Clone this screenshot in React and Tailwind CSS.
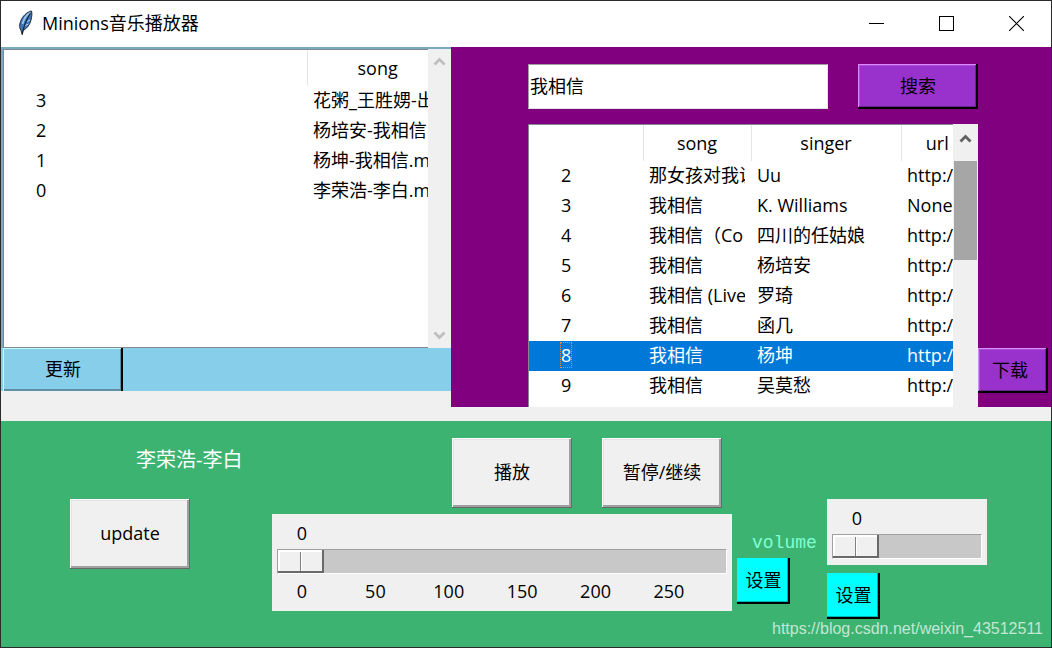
import React, { useState } from 'react';

const LOCAL_SONGS = [
  { id: 3, song: '花粥_王胜娚-出' },
  { id: 2, song: '杨培安-我相信' },
  { id: 1, song: '杨坤-我相信.m' },
  { id: 0, song: '李荣浩-李白.m' },
];

const RESULTS = [
  { id: 2, song: '那女孩对我说', singer: 'Uu', url: 'http:/' },
  { id: 3, song: '我相信', singer: 'K. Williams', url: 'None' },
  { id: 4, song: '我相信（Co', singer: '四川的任姑娘', url: 'http:/' },
  { id: 5, song: '我相信', singer: '杨培安', url: 'http:/' },
  { id: 6, song: '我相信 (Live', singer: '罗琦', url: 'http:/' },
  { id: 7, song: '我相信', singer: '函几', url: 'http:/' },
  { id: 8, song: '我相信', singer: '杨坤', url: 'http:/' },
  { id: 9, song: '我相信', singer: '吴莫愁', url: 'http:/' },
];

const TICKS = [0, 50, 100, 150, 200, 250];

const BUTTON_TONES = {
  gray: 'bg-[#f0f0f0] shadow-[inset_-1px_-1px_#696969,inset_1px_1px_#ffffff,inset_-3px_-3px_#a0a0a0,inset_2px_2px_#e3e3e3]',
  violet: 'bg-[#9932cc] shadow-[inset_-2px_-2px_#000000,inset_1px_1px_#d68cff,inset_-3px_-3px_#6b238f,inset_2px_2px_#b04be0]',
  cyan: 'bg-[#00ffff] shadow-[inset_-2px_-2px_#000000,inset_-3px_-3px_#00b2b2]',
  sky: 'bg-[#87ceeb] shadow-[inset_-2px_0_#000000,inset_1px_1px_#bdffff,inset_-3px_-2px_#5e90a4]',
};

const TkButton = ({ tone = 'gray', className = '', children }) => (
  <button type="button" className={`shrink-0 whitespace-nowrap pb-0.5 ${BUTTON_TONES[tone]} ${className}`}>
    {children}
  </button>
);

const Chevron = ({ down = false, color }) => (
  <svg width="13" height="9" viewBox="0 0 13 9" className={down ? 'rotate-180' : ''}>
    <path d="M1.500 7.500 6.500 2.500 11.500 7.500" fill="none" stroke={color} strokeWidth="2.800" />
  </svg>
);

const Feather = () => (
  <svg width="16" height="26" viewBox="0 0 16 26">
    <path d="M13.500 1C9 2 4.500 6 2.500 11.500C1.200 15 1.300 18 3 20.500L4.200 24.500L5 20.500C9 18.500 12 14.500 13 10C13.700 7 14.300 3.500 13.500 1Z" fill="#3c78bd" stroke="#222c38" strokeWidth="1" />
    <path d="M12.500 2.500C9 4.500 6 8.500 4.500 14" stroke="#9cc6ee" strokeWidth="1.800" fill="none" />
    <path d="M12.500 3C9.500 8 5.500 14 4.300 24.500" stroke="#14202e" strokeWidth="1.100" fill="none" />
    <path d="M12 10 9.500 11.500M10.500 14 7.500 15.500" stroke="#e8f2fc" strokeWidth="0.800" />
  </svg>
);

const TitleBar = () => (
  <header className="flex h-[46px] items-center bg-white pb-0.5 pl-[17px]">
    <Feather />
    <h1 className="ml-2 flex-1 text-[18px] text-black">Minions音乐播放器</h1>
    <button type="button" aria-label="最小化" className="flex h-full w-[70px] items-center justify-center">
      <svg width="15" height="15"><path d="M0 7.500H15" stroke="#000" /></svg>
    </button>
    <button type="button" aria-label="最大化" className="flex h-full w-[70px] items-center justify-center">
      <svg width="15" height="15"><rect x="0.500" y="0.500" width="14" height="14" fill="none" stroke="#000" /></svg>
    </button>
    <button type="button" aria-label="关闭" className="flex h-full w-[70px] items-center justify-center">
      <svg width="15" height="15"><path d="M0 0 15 15M15 0 0 15" stroke="#000" strokeWidth="1.100" /></svg>
    </button>
  </header>
);

const LocalPanel = () => (
  <section className="w-3/7 self-start bg-[#87ceeb]">
    <div className="flex min-h-[301px] border-l-2 border-t-2 border-[#7aaabd]">
      <div className="min-w-0 flex-1 overflow-hidden border-y border-l border-[#828790] bg-white">
        <table className="w-full table-fixed border-collapse text-left">
          <colgroup>
            <col className="w-[303px]" />
            <col />
          </colgroup>
          <thead>
            <tr className="h-9">
              <th className="border-r border-[#e5e5e5] p-0"></th>
              <th className="p-0 pl-[50px] font-normal">song</th>
            </tr>
          </thead>
          <tbody>
            {LOCAL_SONGS.map((s) => (
              <tr key={s.id} className="h-[30px]">
                <td className="p-0 pb-0.5 pl-8">{s.id}</td>
                <td className="overflow-hidden whitespace-nowrap p-0 pb-0.5 pl-1.5">{s.song}</td>
              </tr>
            ))}
          </tbody>
        </table>
      </div>
      <div className="flex w-[23px] flex-col items-center justify-between bg-[#f0f0f0] py-2">
        <Chevron color="#bfbfbf" />
        <Chevron color="#bfbfbf" down />
      </div>
    </div>
    <div className="pl-0.5">
      <TkButton tone="sky" className="h-[43px] w-[120px]">更新</TkButton>
    </div>
  </section>
);

const SearchPanel = () => {
  const [keyword, setKeyword] = useState('我相信');
  const [selected, setSelected] = useState(8);

  return (
    <section className="w-4/7 bg-[#800080] pl-[77px] pt-[17px]">
      <div className="flex gap-[30px] pr-[73px]">
        <input
          type="text"
          aria-label="搜索"
          value={keyword}
          onChange={(e) => setKeyword(e.target.value)}
          className="h-[45px] min-w-0 flex-1 border border-[#e3e3e3] border-l-[#a0a0a0] border-t-[#a0a0a0] bg-white px-px pb-1 outline-none"
        />
        <TkButton tone="violet" className="h-[45px] w-[120px]">搜索</TkButton>
      </div>
      <div className="mt-[15px] flex items-end pr-[3px]">
        <div className="flex min-w-0 flex-1">
          <div className="min-w-0 flex-1 overflow-hidden border-l border-t border-[#828790] bg-white pb-1.5">
            <table className="w-[444px] table-fixed border-collapse text-left">
              <colgroup>
                <col className="w-[114px]" />
                <col className="w-[108px]" />
                <col className="w-[150px]" />
                <col className="w-[72px]" />
              </colgroup>
              <thead>
                <tr className="h-9">
                  <th className="border-r border-[#e5e5e5] p-0"></th>
                  <th className="border-r border-[#e5e5e5] p-0 text-center font-normal">song</th>
                  <th className="border-r border-[#e5e5e5] p-0 text-center font-normal">singer</th>
                  <th className="p-0 text-center font-normal">url</th>
                </tr>
              </thead>
              <tbody>
                {RESULTS.map((r) => (
                  <tr
                    key={r.id}
                    onClick={() => setSelected(r.id)}
                    className={`h-[30px] ${r.id === selected ? 'bg-[#0078d7] text-white' : ''}`}
                  >
                    <td className="p-0 pb-0.5 pl-8">
                      <span className={r.id === selected ? 'outline-1 outline-dotted outline-[#ff8728]' : ''}>{r.id}</span>
                    </td>
                    <td className="p-0 px-1.5 pb-0.5">
                      <div className="overflow-hidden whitespace-nowrap">{r.song}</div>
                    </td>
                    <td className="whitespace-nowrap p-0 px-1.5 pb-0.5">{r.singer}</td>
                    <td className="whitespace-nowrap p-0 px-1.5 pb-0.5">{r.url}</td>
                  </tr>
                ))}
              </tbody>
            </table>
          </div>
          <div className="flex w-[25px] flex-col items-center bg-[#f0f0f0]">
            <div className="flex h-[37px] items-center pb-2">
              <Chevron color="#606060" />
            </div>
            <div className="h-[99px] w-[23px] bg-[#a6a6a6]" />
          </div>
        </div>
        <TkButton tone="violet" className="mb-[14px] h-[45px] w-[70px] pr-1.5">下载</TkButton>
      </div>
    </section>
  );
};

const Scale = ({ id, name, max, ticks }) => {
  const [value, setValue] = useState(0);

  return (
    <div className="bg-[#f0f0f0] px-[5px]">
      <div className="flex h-[35px] items-center pl-0.5 pt-0.5">
        <label htmlFor={id} aria-label={name} className="w-[46px] text-center">{value}</label>
      </div>
      <input
        id={id}
        type="range"
        min="0"
        max={max}
        value={value}
        onChange={(e) => setValue(Number(e.target.value))}
        className="block h-[25px] w-full appearance-none border border-[#ffffff] border-l-[#a0a0a0] border-t-[#a0a0a0] bg-[#c8c8c8] [&::-webkit-slider-thumb]:h-[23px] [&::-webkit-slider-thumb]:w-[46px] [&::-webkit-slider-thumb]:appearance-none [&::-webkit-slider-thumb]:bg-[linear-gradient(90deg,#f0f0f0_22px,#808080_22px,#808080_23px,#ffffff_23px,#ffffff_24px,#f0f0f0_24px)] [&::-webkit-slider-thumb]:shadow-[inset_-2px_-2px_#696969,inset_2px_2px_#ffffff]"
      />
      {ticks ? (
        <div className="flex h-[37px] items-center justify-between pb-1 pl-0.5 pr-[35px]">
          {ticks.map((t) => (
            <span key={t} className="w-[46px] text-center">{t}</span>
          ))}
        </div>
      ) : (
        <div className="h-1.5" />
      )}
    </div>
  );
};

const PlayerPanel = () => (
  <section className="relative flex flex-1 bg-[#3cb371]">
    <div className="w-[271px] pl-[69px] pt-6">
      <p className="pl-[66px] text-[20px] leading-[30px] text-white">李荣浩-李白</p>
      <TkButton className="mt-6 h-[70px] w-[120px]">update</TkButton>
    </div>
    <div className="flex-1 pt-[17px]">
      <div className="mb-1.5 flex justify-end gap-[30px] pr-2.5">
        <TkButton className="h-[70px] w-[120px]">播放</TkButton>
        <TkButton className="h-[70px] w-[120px]">暂停/继续</TkButton>
      </div>
      <Scale id="progress" name="播放" max={273} ticks={TICKS} />
    </div>
    <div className="ml-[5px] w-[90px] pt-[107px]">
      <span className="block pl-[15px] font-['Liberation_Mono',monospace] leading-[30px] text-[#7fffd4]">volume</span>
      <TkButton tone="cyan" className="h-[46px] w-[53px]">设置</TkButton>
    </div>
    <div className="mr-16 w-[160px] pt-[78px]">
      <Scale id="volume" name="volume" max={100} />
      <TkButton tone="cyan" className="mt-2 h-[46px] w-[53px]">设置</TkButton>
    </div>
    <a
      href="https://blog.csdn.net/weixin_43512511"
      className="absolute bottom-1.5 right-2 font-['Liberation_Sans',sans-serif] text-[16px] text-white/70"
    >
      https://blog.csdn.net/weixin_43512511
    </a>
  </section>
);

const App = () => (
  <main className="flex min-h-screen flex-col border border-[#2b2b2b] bg-[#f0f0f0] font-['Open_Sans','Noto_Sans_CJK_SC',sans-serif] text-[18px] leading-6 text-black">
    <TitleBar />
    <div className="flex pb-[14px]">
      <LocalPanel />
      <SearchPanel />
    </div>
    <PlayerPanel />
  </main>
);

export default App;
